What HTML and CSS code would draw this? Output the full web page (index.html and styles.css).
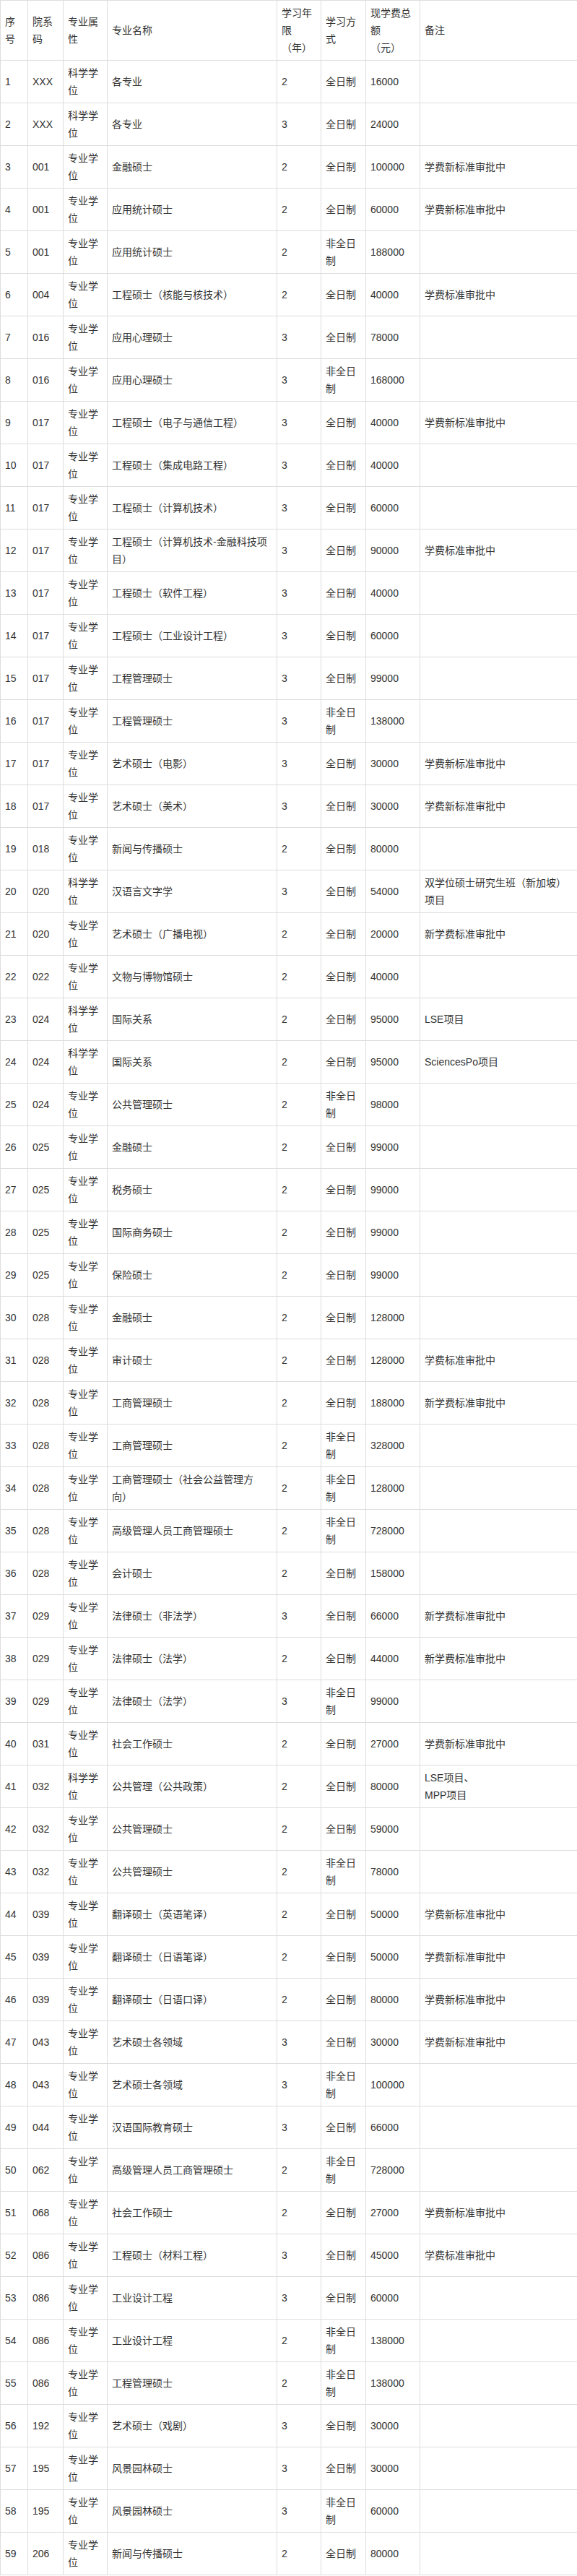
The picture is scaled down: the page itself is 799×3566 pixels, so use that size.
FILE: index.html
```html
<!DOCTYPE html>
<html lang="zh-CN">
<head>
<meta charset="utf-8">
<title>学费标准</title>
<link rel="stylesheet" href="styles.css">
</head>
<body>
<div class="wrap">
<table class="fees">
<colgroup>
<col class="c-no"><col class="c-dept"><col class="c-type"><col class="c-name"><col class="c-year"><col class="c-mode"><col class="c-fee"><col class="c-note">
</colgroup>
<thead>
<tr><td>序号</td><td>院系码</td><td>专业属性</td><td>专业名称</td><td>学习年限<br>（年）</td><td>学习方式</td><td>现学费总额<br>（元）</td><td>备注</td></tr>
</thead>
<tbody>
<tr><td>1</td><td>XXX</td><td>科学学位</td><td>各专业</td><td>2</td><td>全日制</td><td>16000</td><td></td></tr>
<tr><td>2</td><td>XXX</td><td>科学学位</td><td>各专业</td><td>3</td><td>全日制</td><td>24000</td><td></td></tr>
<tr><td>3</td><td>001</td><td>专业学位</td><td>金融硕士</td><td>2</td><td>全日制</td><td>100000</td><td>学费新标准审批中</td></tr>
<tr><td>4</td><td>001</td><td>专业学位</td><td>应用统计硕士</td><td>2</td><td>全日制</td><td>60000</td><td>学费新标准审批中</td></tr>
<tr><td>5</td><td>001</td><td>专业学位</td><td>应用统计硕士</td><td>2</td><td>非全日制</td><td>188000</td><td></td></tr>
<tr><td>6</td><td>004</td><td>专业学位</td><td>工程硕士（核能与核技术）</td><td>2</td><td>全日制</td><td>40000</td><td>学费标准审批中</td></tr>
<tr><td>7</td><td>016</td><td>专业学位</td><td>应用心理硕士</td><td>3</td><td>全日制</td><td>78000</td><td></td></tr>
<tr><td>8</td><td>016</td><td>专业学位</td><td>应用心理硕士</td><td>3</td><td>非全日制</td><td>168000</td><td></td></tr>
<tr><td>9</td><td>017</td><td>专业学位</td><td>工程硕士（电子与通信工程）</td><td>3</td><td>全日制</td><td>40000</td><td>学费新标准审批中</td></tr>
<tr><td>10</td><td>017</td><td>专业学位</td><td>工程硕士（集成电路工程）</td><td>3</td><td>全日制</td><td>40000</td><td></td></tr>
<tr><td>11</td><td>017</td><td>专业学位</td><td>工程硕士（计算机技术）</td><td>3</td><td>全日制</td><td>60000</td><td></td></tr>
<tr><td>12</td><td>017</td><td>专业学位</td><td>工程硕士（计算机技术-金融科技项目）</td><td>3</td><td>全日制</td><td>90000</td><td>学费标准审批中</td></tr>
<tr><td>13</td><td>017</td><td>专业学位</td><td>工程硕士（软件工程）</td><td>3</td><td>全日制</td><td>40000</td><td></td></tr>
<tr><td>14</td><td>017</td><td>专业学位</td><td>工程硕士（工业设计工程）</td><td>3</td><td>全日制</td><td>60000</td><td></td></tr>
<tr><td>15</td><td>017</td><td>专业学位</td><td>工程管理硕士</td><td>3</td><td>全日制</td><td>99000</td><td></td></tr>
<tr><td>16</td><td>017</td><td>专业学位</td><td>工程管理硕士</td><td>3</td><td>非全日制</td><td>138000</td><td></td></tr>
<tr><td>17</td><td>017</td><td>专业学位</td><td>艺术硕士（电影）</td><td>3</td><td>全日制</td><td>30000</td><td>学费新标准审批中</td></tr>
<tr><td>18</td><td>017</td><td>专业学位</td><td>艺术硕士（美术）</td><td>3</td><td>全日制</td><td>30000</td><td>学费新标准审批中</td></tr>
<tr><td>19</td><td>018</td><td>专业学位</td><td>新闻与传播硕士</td><td>2</td><td>全日制</td><td>80000</td><td></td></tr>
<tr><td>20</td><td>020</td><td>科学学位</td><td>汉语言文字学</td><td>3</td><td>全日制</td><td>54000</td><td>双学位硕士研究生班（新加坡）项目</td></tr>
<tr><td>21</td><td>020</td><td>专业学位</td><td>艺术硕士（广播电视）</td><td>2</td><td>全日制</td><td>20000</td><td>新学费标准审批中</td></tr>
<tr><td>22</td><td>022</td><td>专业学位</td><td>文物与博物馆硕士</td><td>2</td><td>全日制</td><td>40000</td><td></td></tr>
<tr><td>23</td><td>024</td><td>科学学位</td><td>国际关系</td><td>2</td><td>全日制</td><td>95000</td><td>LSE项目</td></tr>
<tr><td>24</td><td>024</td><td>科学学位</td><td>国际关系</td><td>2</td><td>全日制</td><td>95000</td><td>SciencesPo项目</td></tr>
<tr><td>25</td><td>024</td><td>专业学位</td><td>公共管理硕士</td><td>2</td><td>非全日制</td><td>98000</td><td></td></tr>
<tr><td>26</td><td>025</td><td>专业学位</td><td>金融硕士</td><td>2</td><td>全日制</td><td>99000</td><td></td></tr>
<tr><td>27</td><td>025</td><td>专业学位</td><td>税务硕士</td><td>2</td><td>全日制</td><td>99000</td><td></td></tr>
<tr><td>28</td><td>025</td><td>专业学位</td><td>国际商务硕士</td><td>2</td><td>全日制</td><td>99000</td><td></td></tr>
<tr><td>29</td><td>025</td><td>专业学位</td><td>保险硕士</td><td>2</td><td>全日制</td><td>99000</td><td></td></tr>
<tr><td>30</td><td>028</td><td>专业学位</td><td>金融硕士</td><td>2</td><td>全日制</td><td>128000</td><td></td></tr>
<tr><td>31</td><td>028</td><td>专业学位</td><td>审计硕士</td><td>2</td><td>全日制</td><td>128000</td><td>学费标准审批中</td></tr>
<tr><td>32</td><td>028</td><td>专业学位</td><td>工商管理硕士</td><td>2</td><td>全日制</td><td>188000</td><td>新学费标准审批中</td></tr>
<tr><td>33</td><td>028</td><td>专业学位</td><td>工商管理硕士</td><td>2</td><td>非全日制</td><td>328000</td><td></td></tr>
<tr><td>34</td><td>028</td><td>专业学位</td><td>工商管理硕士（社会公益管理方向）</td><td>2</td><td>非全日制</td><td>128000</td><td></td></tr>
<tr><td>35</td><td>028</td><td>专业学位</td><td>高级管理人员工商管理硕士</td><td>2</td><td>非全日制</td><td>728000</td><td></td></tr>
<tr><td>36</td><td>028</td><td>专业学位</td><td>会计硕士</td><td>2</td><td>全日制</td><td>158000</td><td></td></tr>
<tr><td>37</td><td>029</td><td>专业学位</td><td>法律硕士（非法学）</td><td>3</td><td>全日制</td><td>66000</td><td>新学费标准审批中</td></tr>
<tr><td>38</td><td>029</td><td>专业学位</td><td>法律硕士（法学）</td><td>2</td><td>全日制</td><td>44000</td><td>新学费标准审批中</td></tr>
<tr><td>39</td><td>029</td><td>专业学位</td><td>法律硕士（法学）</td><td>3</td><td>非全日制</td><td>99000</td><td></td></tr>
<tr><td>40</td><td>031</td><td>专业学位</td><td>社会工作硕士</td><td>2</td><td>全日制</td><td>27000</td><td>学费新标准审批中</td></tr>
<tr><td>41</td><td>032</td><td>科学学位</td><td>公共管理（公共政策）</td><td>2</td><td>全日制</td><td>80000</td><td>LSE项目、<br>MPP项目</td></tr>
<tr><td>42</td><td>032</td><td>专业学位</td><td>公共管理硕士</td><td>2</td><td>全日制</td><td>59000</td><td></td></tr>
<tr><td>43</td><td>032</td><td>专业学位</td><td>公共管理硕士</td><td>2</td><td>非全日制</td><td>78000</td><td></td></tr>
<tr><td>44</td><td>039</td><td>专业学位</td><td>翻译硕士（英语笔译）</td><td>2</td><td>全日制</td><td>50000</td><td>学费新标准审批中</td></tr>
<tr><td>45</td><td>039</td><td>专业学位</td><td>翻译硕士（日语笔译）</td><td>2</td><td>全日制</td><td>50000</td><td>学费新标准审批中</td></tr>
<tr><td>46</td><td>039</td><td>专业学位</td><td>翻译硕士（日语口译）</td><td>2</td><td>全日制</td><td>80000</td><td>学费新标准审批中</td></tr>
<tr><td>47</td><td>043</td><td>专业学位</td><td>艺术硕士各领域</td><td>3</td><td>全日制</td><td>30000</td><td>学费新标准审批中</td></tr>
<tr><td>48</td><td>043</td><td>专业学位</td><td>艺术硕士各领域</td><td>3</td><td>非全日制</td><td>100000</td><td></td></tr>
<tr><td>49</td><td>044</td><td>专业学位</td><td>汉语国际教育硕士</td><td>3</td><td>全日制</td><td>66000</td><td></td></tr>
<tr><td>50</td><td>062</td><td>专业学位</td><td>高级管理人员工商管理硕士</td><td>2</td><td>非全日制</td><td>728000</td><td></td></tr>
<tr><td>51</td><td>068</td><td>专业学位</td><td>社会工作硕士</td><td>2</td><td>全日制</td><td>27000</td><td>学费新标准审批中</td></tr>
<tr><td>52</td><td>086</td><td>专业学位</td><td>工程硕士（材料工程）</td><td>3</td><td>全日制</td><td>45000</td><td>学费标准审批中</td></tr>
<tr><td>53</td><td>086</td><td>专业学位</td><td>工业设计工程</td><td>3</td><td>全日制</td><td>60000</td><td></td></tr>
<tr><td>54</td><td>086</td><td>专业学位</td><td>工业设计工程</td><td>2</td><td>非全日制</td><td>138000</td><td></td></tr>
<tr><td>55</td><td>086</td><td>专业学位</td><td>工程管理硕士</td><td>2</td><td>非全日制</td><td>138000</td><td></td></tr>
<tr><td>56</td><td>192</td><td>专业学位</td><td>艺术硕士（戏剧）</td><td>3</td><td>全日制</td><td>30000</td><td></td></tr>
<tr><td>57</td><td>195</td><td>专业学位</td><td>风景园林硕士</td><td>3</td><td>全日制</td><td>30000</td><td></td></tr>
<tr><td>58</td><td>195</td><td>专业学位</td><td>风景园林硕士</td><td>3</td><td>非全日制</td><td>60000</td><td></td></tr>
<tr><td>59</td><td>206</td><td>专业学位</td><td>新闻与传播硕士</td><td>2</td><td>全日制</td><td>80000</td><td></td></tr>
</tbody>
</table>
</div>
</body>
</html>
```
FILE: styles.css
```css
html, body {
  margin: 0;
  padding: 0;
  background: #fff;
}
body {
  font-family: "Liberation Sans", "Noto Sans CJK SC", sans-serif;
  font-size: 14px;
  color: #333;
}
.wrap {
  width: 799px;
  overflow: hidden;
}
.fees {
  width: 802px;
  border-collapse: collapse;
  table-layout: fixed;
}
.fees td {
  border: 1px solid #ddd;
  padding: 5px 6px;
  line-height: 24px;
  vertical-align: middle;
  text-align: left;
  text-spacing-trim: space-all;
}
.c-no { width: 38px; }
.c-dept { width: 49px; }
.c-type { width: 61px; }
.c-name { width: 235px; }
.c-year { width: 61px; }
.c-mode { width: 62px; }
.c-fee { width: 75px; }
.c-note { width: 221px; }
```
